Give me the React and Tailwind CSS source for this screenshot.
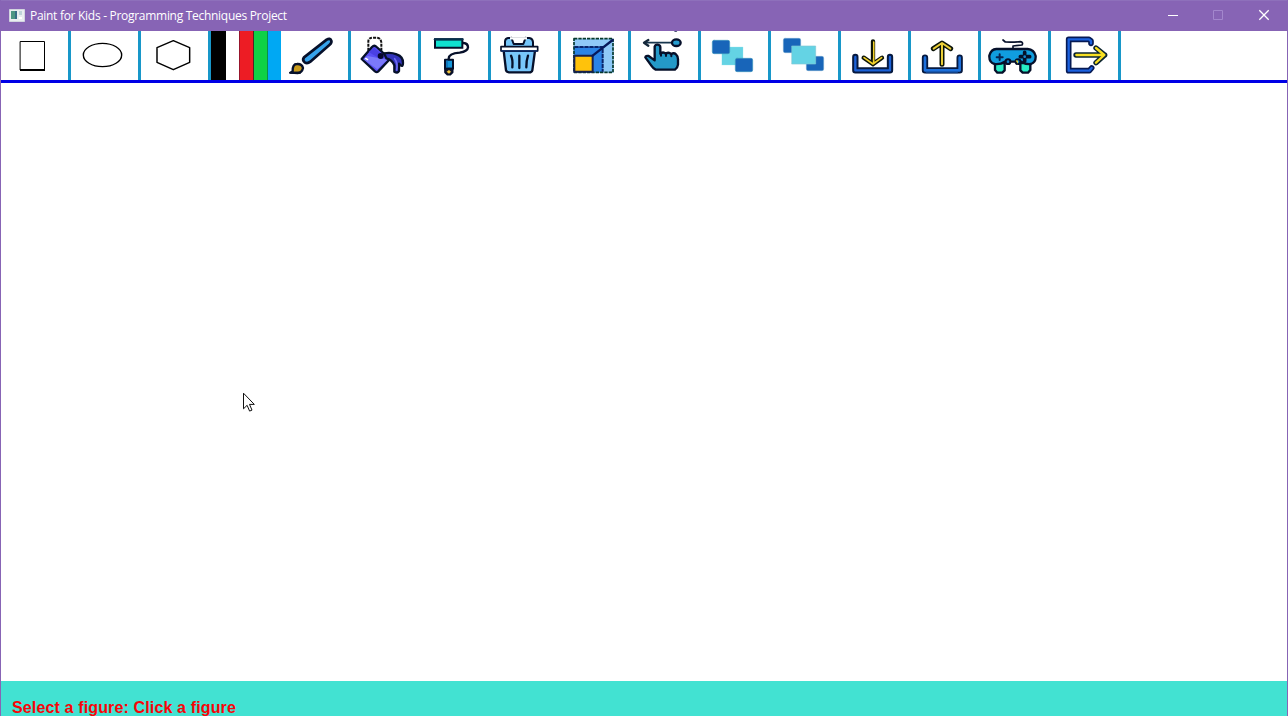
import React from "react";

const INK = "#06102a";

function Icon({ odd, children }) {
  return (
    <svg
      className="h-[49px] w-[67px] shrink-0"
      viewBox={odd ? "213 9 201 147" : "3 9 201 147"}
      fill="none"
      stroke={INK}
      strokeWidth="6"
      strokeLinejoin="round"
      strokeLinecap="round"
    >
      {children}
    </svg>
  );
}

const tools = [
  {
    name: "Rectangle",
    icon: (
      <Icon>
        <path d="M61.5 40.5H133.5V126H61.5Z" stroke="#000" strokeWidth="3" strokeLinejoin="miter" />
        <path d="M60 126H135" stroke="#000" strokeWidth="6" strokeLinecap="butt" />
      </Icon>
    ),
  },
  {
    name: "Ellipse",
    icon: (
      <Icon odd>
        <ellipse cx="307.5" cy="81" rx="57.5" ry="35" stroke="#000" strokeWidth="4.2" />
      </Icon>
    ),
  },
  {
    name: "Hexagon",
    icon: (
      <Icon>
        <path d="M100 38L149 59V103L100 125L51 103V59Z" stroke="#000" strokeWidth="4.4" />
      </Icon>
    ),
  },
  { name: "Colours", palette: true },
  {
    name: "Brush",
    icon: (
      <Icon>
        <path d="M140 35Q150 29 154 38Q156 44 149 50L91 101Q82 108 74 103Q66 96 72 88Z" fill="#36a3ec" strokeWidth="8" />
        <path d="M32 134L38 130Q37 108 51 108Q66 107 69 120Q66 134 53 135Z" fill="#c99b1c" strokeWidth="7" />
        <path d="M30 134H60" strokeWidth="6" />
      </Icon>
    ),
  },
  {
    name: "Fill",
    icon: (
      <Icon odd>
        <path d="M265 68V39Q266 29 280 29H290Q303 30 304 44V72" stroke="#111" strokeWidth="6" strokeDasharray="9 3" strokeLinecap="butt" />
        <path d="M245 93L276 57Q283 50 290 57L330 93L294 131Q290 134 285 130Z" fill="#5a50f6" strokeWidth="7" />
        <path d="M250 94L263 84L322 95L292 124Z" fill="#7b79fb" stroke="none" />
        <path d="M266 72L283 60L307 80L296 90Z" fill="#4a40e4" stroke="none" />
        <path d="M312 76Q333 72 350 79Q370 86 369 105Q369 117 362 112L357 107V129Q353 137 343 131V112Q337 95 319 91Z" fill="#3334bd" strokeWidth="7" />
        <path d="M344 92Q354 105 350 126" stroke="#6d6af2" strokeWidth="5" />
        <circle cx="302" cy="84" r="9" fill="#080830" stroke="none" />
        <path d="M257 91L263 95" stroke="#fff" strokeWidth="4" />
      </Icon>
    ),
  },
  {
    name: "Roller",
    icon: (
      <Icon>
        <path d="M45 34H127V59H45Z" fill="#10e1d0" strokeWidth="6" strokeLinejoin="miter" />
        <path d="M45 34H127" stroke="#06304c" strokeWidth="7" />
        <path d="M130 45Q144 46 144 58Q143 70 119 74Q86 76 86 92" strokeWidth="7" />
        <path d="M75 95H99V122H75Z" fill="#1597db" strokeWidth="6" />
        <path d="M81 98V119" stroke="#0d68ad" strokeWidth="4" />
        <path d="M75 122H98V133L91 140H82L75 133Z" fill="#15172a" strokeWidth="5" />
        <path d="M80 131L87 126L93 131L87 137Z" fill="#f2c63e" stroke="none" />
      </Icon>
    ),
  },
  {
    name: "Delete",
    icon: (
      <Icon odd>
        <path d="M255 57V40Q256 31 264 30H328Q338 31 339 42V57Z" fill="#75c6fa" />
        <path d="M274 29L281 48H310L317 29" fill="#fff" />
        <path d="M270 31H321" stroke="#fff" strokeWidth="7" strokeLinecap="butt" />
        <path d="M251 68H345L337 127Q335 133 328 133H267Q259 132 258 127Z" fill="#78c7fb" strokeWidth="7" />
        <path d="M243 56H353V69H243Z" fill="#fff" strokeWidth="5" />
        <path d="M245 69H351" stroke="#0b2b6b" strokeWidth="5" />
        <path d="M273 83Q279 94 277 118M298 83V120M324 83Q319 97 319 118" strokeWidth="7" />
      </Icon>
    ),
  },
  {
    name: "Resize",
    icon: (
      <Icon>
        <path d="M41 32H161V134H41Z" fill="#8fc9f8" stroke="none" />
        <path d="M41 57H128V134H41Z" fill="#2a83e6" stroke="none" />
        <path d="M42 32H159V133H42Z" stroke="#07392d" strokeWidth="5" strokeDasharray="10 3" strokeLinecap="butt" />
        <path d="M43 57H128V131" stroke="#09246b" strokeWidth="6" strokeDasharray="13 2" strokeLinecap="butt" />
        <path d="M43 83H98V131H43Z" fill="#ffc20b" stroke="#18204b" strokeWidth="6" strokeLinejoin="miter" />
        <path d="M98 83L158 36" stroke="#08195b" strokeWidth="7" />
      </Icon>
    ),
  },
  {
    name: "Move",
    icon: (
      <Icon odd>
        <path d="M345 9H349" stroke="#101b47" strokeWidth="5" />
        <path d="M254 44H334" stroke="#17354d" strokeWidth="5" />
        <path d="M265 36L252 44L265 53" stroke="#15283a" strokeWidth="7" />
        <ellipse cx="349" cy="44" rx="13" ry="10" fill="#279ed0" strokeWidth="7" />
        <path d="M284 97V56Q286 49 293 50Q301 51 301 58V77Q310 70 317 77Q327 71 333 78Q342 73 348 79Q354 84 354 94V110Q353 119 345 125H287Q280 122 274 113L256 88Q257 82 266 84L284 97Z" fill="#2499c8" strokeWidth="7" />
        <path d="M303 77V83M318 78V84M334 79V85" strokeWidth="6" />
      </Icon>
    ),
  },
  {
    name: "Send back",
    icon: (
      <Icon>
        <path d="M66 57H129V111H66Z" fill="#64d3e4" stroke="#9ce7ef" strokeWidth="1" />
        <rect x="37" y="37" width="52" height="40" rx="5" fill="#1865b9" stroke="#3b94bd" strokeWidth="2" />
        <rect x="106" y="91" width="52" height="40" rx="5" fill="#1865b9" stroke="#3b94bd" strokeWidth="2" />
      </Icon>
    ),
  },
  {
    name: "Bring front",
    icon: (
      <Icon odd>
        <rect x="250" y="31" width="52" height="43" rx="5" fill="#1865b9" stroke="#6ba3ca" strokeWidth="1.5" />
        <rect x="319" y="85" width="52" height="43" rx="5" fill="#1865b9" stroke="#6ba3ca" strokeWidth="1.5" />
        <path d="M276 54H347V108H276Z" fill="#64d3e4" stroke="#80c7d3" strokeWidth="2" />
      </Icon>
    ),
  },
  {
    name: "Save",
    icon: (
      <Icon>
        <path d="M46 87V127H150V87" stroke="#06193f" strokeWidth="19" />
        <path d="M46 87V127H150V87" stroke="#1c62d8" strokeWidth="7" />
        <path d="M99 40V104M71 89L99 108L126 89" stroke="#0c1408" strokeWidth="13" strokeLinejoin="miter" />
        <path d="M101 42V104M72 89L99 108L125 89" stroke="#f4d32c" strokeWidth="5" />
        <path d="M97 43V90" stroke="#0c1408" strokeWidth="3" />
      </Icon>
    ),
  },
  {
    name: "Load",
    icon: (
      <Icon odd>
        <path d="M255 89V127H359V89" stroke="#06193f" strokeWidth="19" />
        <path d="M255 89V127H359V89" stroke="#1c70dc" strokeWidth="8" />
        <path d="M259 134H352" stroke="#124289" strokeWidth="4" />
        <path d="M306 109V46M280 62L306 45L332 62" stroke="#0c1408" strokeWidth="15" />
        <path d="M306 109V46M281 62L306 45L331 62" stroke="#eace38" strokeWidth="6" />
      </Icon>
    ),
  },
  {
    name: "Play",
    icon: (
      <Icon>
        <path d="M69 36L76 42Q99 43 121 41Q131 43 126 51L99 54V63" strokeWidth="5" />
        <path d="M45 105H74V127L67 134H52L45 126Z" fill="#27edc5" strokeWidth="7" />
        <path d="M121 105H151V126L144 134H128L121 127Z" fill="#27edc5" strokeWidth="7" />
        <path d="M28 83Q33 64 49 63H143Q162 64 167 84Q168 103 153 108Q136 110 124 101H74Q61 110 44 108Q27 104 28 83Z" fill="#109ddf" strokeWidth="7" />
        <path d="M59 79V96M50 88H68" stroke="#072452" strokeWidth="6" />
        <path d="M134 73V80M134 93V100M121 86H127M141 86H149" strokeWidth="11" />
        <circle cx="134" cy="86" r="4" fill="#1687cf" stroke="none" />
        <circle cx="84" cy="101" r="7" fill="#1487d1" />
        <circle cx="114" cy="101" r="7" fill="#1487d1" />
        <path d="M107 97L114 98L113 107Z" fill="#eddc24" stroke="none" />
      </Icon>
    ),
  },
  {
    name: "Exit",
    icon: (
      <Icon odd>
        <path d="M333 46V39L327 34H266V128H328L335 120" stroke="#061a54" strokeWidth="17" />
        <path d="M333 46V39L327 34H266V128H328L335 120" stroke="#1c62e0" strokeWidth="7" />
        <path d="M288 81H374M348 60L374 81L348 104" stroke="#0b2430" strokeWidth="16" />
        <path d="M289 81H373M348 60L373 81L348 104" stroke="#f7df22" strokeWidth="7" />
      </Icon>
    ),
  },
];

function Palette() {
  return (
    <div className="flex h-[49px] w-[70px] shrink-0">
      <div className="w-[15px] bg-black" />
      <div className="w-[13px] bg-white" />
      <div className="w-[14px] border-l border-[#98152c] bg-[#ed1c24]" />
      <div className="w-[14px] border-l border-[#4b2723] bg-[#0ed145]" />
      <div className="w-[14px] border-l border-[#0a8e48] bg-[#00a8f3]" />
    </div>
  );
}

function TitleBar() {
  return (
    <header className="flex h-[31px] shrink-0 items-center border-t border-[#8e70bb] bg-[#8764b5] pl-2">
      <svg className="h-[14px] w-4 -translate-y-px" viewBox="0 0 16 14">
        <path d="M.5 1.5H15.5V13.5H.5Z" fill="#e9edf0" stroke="#d1d4df" />
        <path d="M2 3H8V11H2Z" fill="#4d9684" />
        <path d="M6 3H8V11H6Z" fill="#376d87" />
        <path d="M10 3H13V7H10Z" fill="#bfd4d9" />
        <path d="M10 9H13V11H10Z" fill="#fff" />
      </svg>
      <span className="ml-[5px] whitespace-nowrap font-['Open_Sans',sans-serif] text-[12px] leading-4 tracking-[-0.29px] text-white">
        Paint for Kids - Programming Techniques Project
      </span>
      <svg className="ml-auto h-[30px] w-[138px]" viewBox="1149 1 138 30" fill="none">
        <path d="M1168 15.5H1178" stroke="#fff" />
        <path d="M1213.5 10.5H1222.5V19.5H1213.5Z" stroke="#a387cd" />
        <path d="M1259.3 10.3L1268.7 19.7M1268.7 10.3L1259.3 19.7" stroke="#fff" strokeWidth="1.3" />
      </svg>
    </header>
  );
}

export default function App() {
  return (
    <div className="relative flex h-[716px] w-[1288px] flex-col overflow-hidden border-x border-[#8764b5] bg-white">
      <TitleBar />
      <nav className="flex h-[52px] shrink-0 border-b-[3px] border-[#0000e6]">
        {tools.map((tool) =>
          tool.palette ? (
            <Palette key={tool.name} />
          ) : (
            <button
              key={tool.name}
              aria-label={tool.name}
              className="flex h-[49px] w-[70px] shrink-0 border-r-[3px] border-[#1897c9]"
            >
              {tool.icon}
            </button>
          )
        )}
      </nav>
      <main className="flex-1 bg-white" />
      <footer className="h-[35px] shrink-0 bg-[#42e2d2] pl-[11px] pt-[18px]">
        <p className="whitespace-nowrap font-['Liberation_Sans',Arial,sans-serif] text-[16px] font-bold leading-[18px] tracking-[0.14px] text-[#f80408]">
          Select a figure: Click a figure
        </p>
      </footer>
      <svg className="absolute left-[242px] top-[392px] h-5 w-3" viewBox="0 0 12 20">
        <path
          d="M.5 1.2V16.8L4.1 13.3L6.6 19.1L9 18.1L6.5 12.4H11.3Z"
          fill="#fff"
          stroke="#111"
        />
      </svg>
    </div>
  );
}
